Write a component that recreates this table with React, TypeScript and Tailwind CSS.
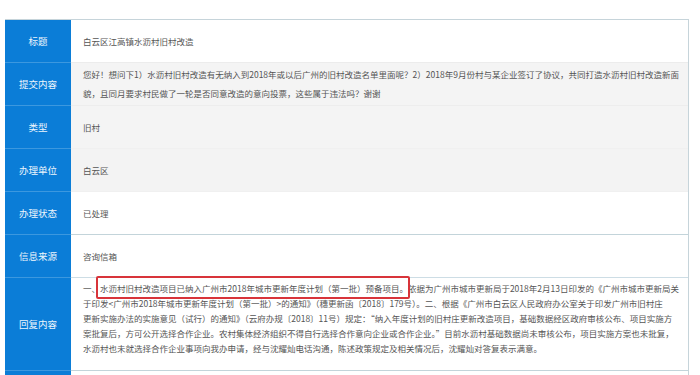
const rows = [
  { label: '标题', bg: 'bg-white', border: 'border-[#ececec]', lines: ['白云区江高镇水沥村旧村改造'] },
  {
    label: '提交内容',
    bg: 'bg-[#f4f4f4]',
    border: 'border-[#ededed]',
    lines: [
      '您好！想问下1）水沥村旧村改造有无纳入到2018年或以后广州的旧村改造名单里面呢？2）2018年9月份村与某企业签订了协议，共同打造水沥村旧村改造新面',
      '貌，且同月要求村民做了一轮是否同意改造的意向投票，这些属于违法吗？谢谢',
    ],
  },
  { label: '类型', bg: 'bg-[#f4f4f4]', border: 'border-[#f0f0f0]', lines: ['旧村'] },
  { label: '办理单位', bg: 'bg-[#f3f3f3]', border: 'border-[#f0f0f0]', lines: ['白云区'] },
  { label: '办理状态', bg: 'bg-white', border: 'border-[#c3d4da]', lines: ['已处理'] },
  { label: '信息来源', bg: 'bg-white', border: 'border-[#cddde5]', lines: ['咨询信箱'] },
]

export default function App() {
  return (
    <div className="min-h-screen bg-white pt-[19px] pl-[5px] font-['Noto_Sans_CJK_SC','Noto_Sans',sans-serif] overflow-hidden">
      <div className="w-[684px] border-t border-r border-[#c6d4da]">
        {rows.map((row) => (
          <div key={row.label} className="flex">
            {/* label column */}
            <div className="w-[66px] shrink-0 bg-[#0b7dd7] border-b border-[#3c98df] flex items-center justify-center text-[9.5px] text-[#eef6fd]">
              {row.label}
            </div>
            <div
              className={`flex-1 h-[43px] border-b ${row.bg} ${row.border} flex flex-col justify-center pl-[12px] text-[8.5px] leading-[19px] text-[#555555]`}
            >
              {row.lines.map((l) => (
                <div key={l} className="whitespace-nowrap">
                  {l}
                </div>
              ))}
            </div>
          </div>
        ))}

        {/* reply */}
        <div className="flex">
          <div className="w-[66px] shrink-0 bg-[#0b7dd7] border-b border-[#3c98df] flex items-center justify-center text-[9.5px] text-[#eef6fd]">
            回复内容
          </div>
          <div className="flex-1 h-[93px] border-b border-[#c3d4da] bg-white pl-[12px] pt-[3px] text-[8.5px] leading-[15px] text-[#555555]">
            <div className="whitespace-nowrap">
              一、
              <span className="relative">
                水沥村旧村改造项目已纳入广州市2018年城市更新年度计划（第一批）预备项目。
                <span className="absolute -left-[4px] -right-[2px] -top-[6px] -bottom-[5px] border-2 border-[#d8343a] rounded-[2px]"></span>
              </span>
              依据为广州市城市更新局于2018年2月13日印发的《广州市城市更新局关
            </div>
            <div className="whitespace-nowrap">
              于印发&lt;广州市2018年城市更新年度计划（第一批）&gt;的通知》（穗更新函〔2018〕179号）。二、根据《广州市白云区人民政府办公室关于印发广州市旧村庄
            </div>
            <div className="whitespace-nowrap">
              更新实施办法的实施意见（试行）的通知》（云府办规〔2018〕11号）规定：“纳入年度计划的旧村庄更新改造项目，基础数据经区政府审核公布、项目实施方
            </div>
            <div className="whitespace-nowrap">
              案批复后，方可公开选择合作企业。农村集体经济组织不得自行选择合作意向企业或合作企业。”目前水沥村基础数据尚未审核公布，项目实施方案也未批复，
            </div>
            <div className="whitespace-nowrap">
              水沥村也未就选择合作企业事项向我办申请，经与沈耀灿电话沟通，陈述政策规定及相关情况后，沈耀灿对答复表示满意。
            </div>
          </div>
        </div>

        {/* next row, cut off by the frame */}
        <div className="flex">
          <div className="w-[66px] shrink-0 bg-[#0b7dd7] h-[43px]"></div>
          <div className="flex-1 h-[43px] bg-white"></div>
        </div>
      </div>
    </div>
  )
}
